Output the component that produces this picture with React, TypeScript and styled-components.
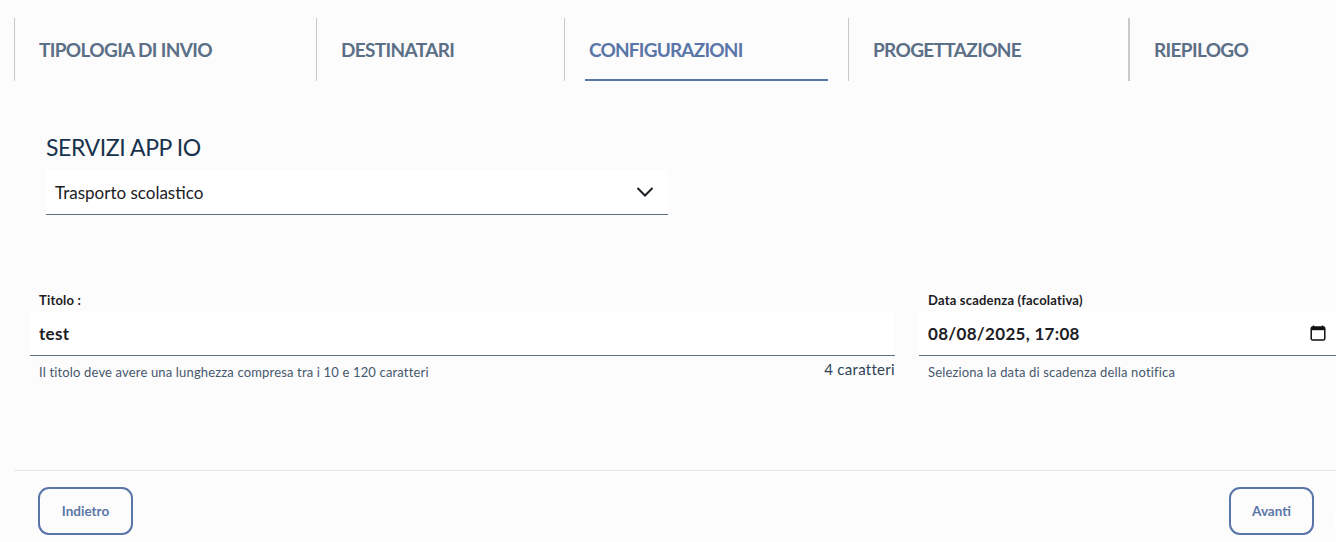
import React from 'react';
import styled, { createGlobalStyle } from 'styled-components';

const GlobalStyle = createGlobalStyle`
  html, body {
    margin: 0;
    padding: 0;
    background: #fcfcfc;
    font-family: 'Lato', 'Liberation Sans', sans-serif;
    overflow: hidden;
  }
  * {
    box-sizing: border-box;
  }
`;

const Page = styled.main`
  position: relative;
  width: 1336px;
  height: 542px;
  padding-top: 18px;
  overflow: hidden;
`;

const Steps = styled.nav`
  display: flex;
  height: 63px;
  margin-left: 14px;
`;

const Step = styled.div<{ $width: number; $thick?: boolean }>`
  width: ${(p) => p.$width}px;
  border-left: ${(p) => (p.$thick ? '2px' : '1px')} solid #c9c9c9;
  padding-left: 24px;
  display: flex;
  align-items: center;
  height: 63px;
`;

const StepLabel = styled.span`
  font-size: 19px;
  font-weight: 700;
  letter-spacing: -0.65px;
  color: #5b6f87;
`;

const ActiveStep = styled.div`
  flex: 1;
  height: 63px;
  margin-right: 20px;
  margin-left: -4px;
  padding: 2px 0 0 4px;
  display: flex;
  align-items: center;
  border-bottom: 2px solid #5a76a8;
  font-size: 19px;
  font-weight: 700;
  letter-spacing: -0.8px;
  color: #5a76a8;
`;

const ServiceBlock = styled.section`
  width: 622px;
  margin: 53px 0 0 46px;
`;

const ServiceTitle = styled.h2`
  margin: 0;
  height: 36px;
  line-height: 27px;
  font-size: 23px;
  font-weight: 400;
  letter-spacing: -0.4px;
  color: #17324d;
`;

const SelectBox = styled.div`
  height: 45px;
  display: flex;
  align-items: center;
  justify-content: space-between;
  padding: 0 14px 0 9px;
  background: #ffffff;
  border-bottom: 1px solid #5c6f82;
  font-size: 17px;
  color: #1c2024;
`;

const FormRow = styled.section`
  display: flex;
  gap: 24px;
  margin: 78px 0 0 30px;
`;

const Field = styled.div<{ $width: number }>`
  width: ${(p) => p.$width}px;
`;

const FieldLabel = styled.label`
  display: block;
  height: 18px;
  line-height: 15px;
  padding-left: 9px;
  font-size: 13px;
  font-weight: 700;
  letter-spacing: 0.2px;
  color: #1c2024;
`;

const InputBox = styled.div`
  height: 45px;
  display: flex;
  align-items: center;
  padding: 0 10px 0 9px;
  background: #ffffff;
  border-bottom: 1px solid #5c6f82;
`;

const TextInput = styled.input`
  flex: 1;
  min-width: 0;
  padding: 0;
  border: 0;
  outline: 0;
  background: transparent;
  font-family: 'Lato', 'Liberation Sans', sans-serif;
  font-size: 17px;
  font-weight: 700;
  letter-spacing: 0.3px;
  color: #1c2024;
`;

const HintRow = styled.div`
  display: flex;
  justify-content: space-between;
  align-items: flex-start;
  padding: 6px 0 0 9px;
  font-size: 13px;
  letter-spacing: 0.16px;
  line-height: 20px;
  color: #46586d;
`;

const Counter = styled.span`
  margin-top: -3px;
  font-size: 15px;
  letter-spacing: 0.3px;
  line-height: 20px;
  color: #2f4356;
`;

const Footer = styled.footer`
  display: flex;
  justify-content: space-between;
  margin: 88px 0 0 14px;
  padding: 16px 22px 0 24px;
  border-top: 1px solid #e8e8e8;
`;

const NavButton = styled.button<{ $width: number }>`
  width: ${(p) => p.$width}px;
  height: 48px;
  padding: 0;
  background: transparent;
  border: 2px solid #5a76a8;
  border-radius: 11px;
  font-family: 'Lato', 'Liberation Sans', sans-serif;
  font-size: 13.5px;
  font-weight: 700;
  color: #5a76a8;
`;

const CornerBlob = styled.div`
  position: absolute;
  right: -37px;
  bottom: 0;
  width: 40px;
  height: 40px;
  border-radius: 50%;
  background: #ffffff;
`;

function Chevron() {
  return (
    <svg width="18" height="18" viewBox="0 0 18 18" fill="none">
      <path d="M1.5 5 L9 12.5 L16.5 5" stroke="#1c2024" strokeWidth="2" />
    </svg>
  );
}

function CalendarIcon() {
  return (
    <svg width="16" height="16" viewBox="0 0 16 16" fill="none">
      <path d="M3.5 0.5 V3 M12.5 0.5 V3" stroke="#111" strokeWidth="1.5" />
      <rect x="1.2" y="2" width="13.6" height="13" rx="1.5" stroke="#111" strokeWidth="1.5" />
      <rect x="1.2" y="2" width="13.6" height="3.2" fill="#111" />
    </svg>
  );
}

export default function App() {
  return (
    <Page>
      <GlobalStyle />

      <Steps>
        <Step $width={302}><StepLabel>TIPOLOGIA DI INVIO</StepLabel></Step>
        <Step $width={248}><StepLabel>DESTINATARI</StepLabel></Step>
        <Step $width={284}>
          <ActiveStep>CONFIGURAZIONI</ActiveStep>
        </Step>
        <Step $width={280}><StepLabel>PROGETTAZIONE</StepLabel></Step>
        <Step $width={200} $thick><StepLabel>RIEPILOGO</StepLabel></Step>
      </Steps>

      <ServiceBlock>
        <ServiceTitle>SERVIZI APP IO</ServiceTitle>
        <SelectBox>
          Trasporto scolastico
          <Chevron />
        </SelectBox>
      </ServiceBlock>

      <FormRow>
        <Field $width={865}>
          <FieldLabel>Titolo :</FieldLabel>
          <InputBox>
            <TextInput defaultValue="test" />
          </InputBox>
          <HintRow>
            <span>Il titolo deve avere una lunghezza compresa tra i 10 e 120 caratteri</span>
            <Counter>4 caratteri</Counter>
          </HintRow>
        </Field>
        <Field $width={417}>
          <FieldLabel>Data scadenza (facolativa)</FieldLabel>
          <InputBox>
            <TextInput defaultValue="08/08/2025, 17:08" />
            <CalendarIcon />
          </InputBox>
          <HintRow>
            <span>Seleziona la data di scadenza della notifica</span>
          </HintRow>
        </Field>
      </FormRow>

      <Footer>
        <NavButton $width={95}>Indietro</NavButton>
        <NavButton $width={85}>Avanti</NavButton>
      </Footer>

      <CornerBlob />
    </Page>
  );
}
